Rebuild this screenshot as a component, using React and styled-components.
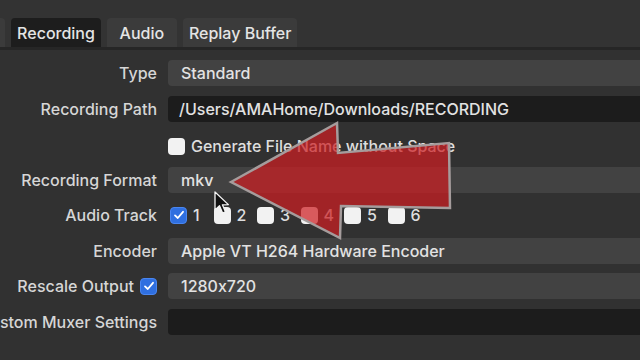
import React from 'react';
import styled, { createGlobalStyle } from 'styled-components';

const GlobalStyle = createGlobalStyle`
  html, body {
    margin: 0;
    padding: 0;
    background: #313131;
  }
  body {
    font-family: 'Inter', 'Liberation Sans', sans-serif;
    font-feature-settings: 'calt' 0;
    overflow: hidden;
  }
`;

const Window = styled.div`
  position: relative;
  width: 640px;
  height: 360px;
  overflow: hidden;
  background: #313131;
  color: #dcdcdc;
`;

const TabBar = styled.div`
  display: flex;
  align-items: flex-end;
  gap: 6px;
  height: 47px;
  background: #333333;
  border-bottom: 3px solid #262626;
`;

const Tab = styled.div`
  flex: none;
  min-width: 70px;
  height: 29px;
  box-sizing: border-box;
  padding: 0 6px;
  margin-left: ${p => (p.$offset ? `${p.$offset}px` : '0')};
  display: flex;
  align-items: center;
  justify-content: center;
  border-radius: 4px 4px 0 0;
  background: ${p => (p.$active ? '#1d1d1d' : '#3b3b3b')};
  color: #e4e4e4;
  font-size: 16px;
  font-weight: 500;
  white-space: nowrap;
`;

const Form = styled.div`
  display: grid;
  grid-template-columns: 157px 1fr;
  grid-auto-rows: 26px;
  column-gap: 11px;
  row-gap: 9.5px;
  padding-top: 10px;
`;

const Label = styled.div`
  display: flex;
  align-items: center;
  justify-content: flex-end;
  gap: 6px;
  font-size: 16px;
  font-weight: 500;
  color: #d6d6d6;
  white-space: nowrap;
`;

const Field = styled.div`
  display: flex;
  align-items: center;
  padding-left: ${p => (p.$edit ? '11px' : '13px')};
  margin-right: -10px;
  border-radius: 4px;
  background: ${p => (p.$edit ? '#1c1c1c' : '#424242')};
  font-size: 16px;
  font-weight: 500;
  color: #e2e2e2;
  white-space: nowrap;
`;

const CheckRow = styled.div`
  display: flex;
  align-items: center;
  gap: 6px;
  margin-top: ${p => p.$shift || 0}px;
  font-size: 16px;
  font-weight: 500;
  color: #dedede;
  white-space: nowrap;
`;

const Tracks = styled.div`
  display: flex;
  align-items: center;
  padding-left: 2px;
`;

const Track = styled.div`
  display: flex;
  align-items: center;
  gap: 6px;
  width: 43.5px;
  font-size: 16px;
  font-weight: 500;
  color: #dedede;
`;

const Box = styled.span`
  flex: none;
  width: 17px;
  height: 17px;
  box-sizing: border-box;
  border-radius: 4px;
  display: flex;
  align-items: center;
  justify-content: center;
  background: ${p => (p.$checked ? '#2f6fe0' : '#f2f2f2')};
  border: ${p => (p.$checked ? '1px solid #4a86f0' : 'none')};
`;

const Overlay = styled.svg`
  position: absolute;
  left: 0;
  top: 0;
  pointer-events: none;
`;

const Check = ({ checked }) => (
  <Box $checked={checked}>
    {checked && (
      <svg width="12" height="12" viewBox="0 0 12 12">
        <path d="M2 6.4 L4.8 9 L10 2.8" fill="none" stroke="#fff" strokeWidth="1.8" strokeLinecap="round" strokeLinejoin="round" />
      </svg>
    )}
  </Box>
);

const tracks = [1, 2, 3, 4, 5, 6];

export default function App() {
  return (
    <Window>
      <GlobalStyle />
      <TabBar>
        <Tab $offset={-85}>Streaming</Tab>
        <Tab $active>Recording</Tab>
        <Tab>Audio</Tab>
        <Tab>Replay Buffer</Tab>
      </TabBar>

      <Form>
        <Label>Type</Label>
        <Field>Standard</Field>

        <Label>Recording Path</Label>
        <Field $edit>/Users/AMAHome/Downloads/RECORDING</Field>

        <span />
        <CheckRow $shift={4}>
          <Check />
          Generate File Name without Space
        </CheckRow>

        <Label>Recording Format</Label>
        <Field>mkv</Field>

        <Label>Audio Track</Label>
        <Tracks>
          {tracks.map(n => (
            <Track key={n}>
              <Check checked={n === 1} />
              {n}
            </Track>
          ))}
        </Tracks>

        <Label>Encoder</Label>
        <Field>Apple VT H264 Hardware Encoder</Field>

        <Label>
          Rescale Output
          <Check checked />
        </Label>
        <Field>1280x720</Field>

        <Label>Custom Muxer Settings</Label>
        <Field $edit />
      </Form>

      {/* annotation arrow drawn over the form */}
      <Overlay width="640" height="360" viewBox="0 0 640 360">
        <polygon
          points="231,182 337,123 338,153 449,143 450,208 341,206 340,238"
          fill="rgb(205,30,34)"
          fillOpacity="0.72"
          stroke="#a59c9c"
          strokeWidth="2.5"
          strokeLinejoin="miter"
        />
      </Overlay>

      {/* mouse pointer */}
      <Overlay width="640" height="360" viewBox="0 0 640 360">
        <path
          d="M215 192 L215 210 L219.5 205.8 L222.6 213 L225.4 211.8 L222.4 204.8 L228.4 204.6 Z"
          fill="#111"
          stroke="#f4f4f4"
          strokeWidth="1.3"
          strokeLinejoin="round"
        />
      </Overlay>
    </Window>
  );
}
